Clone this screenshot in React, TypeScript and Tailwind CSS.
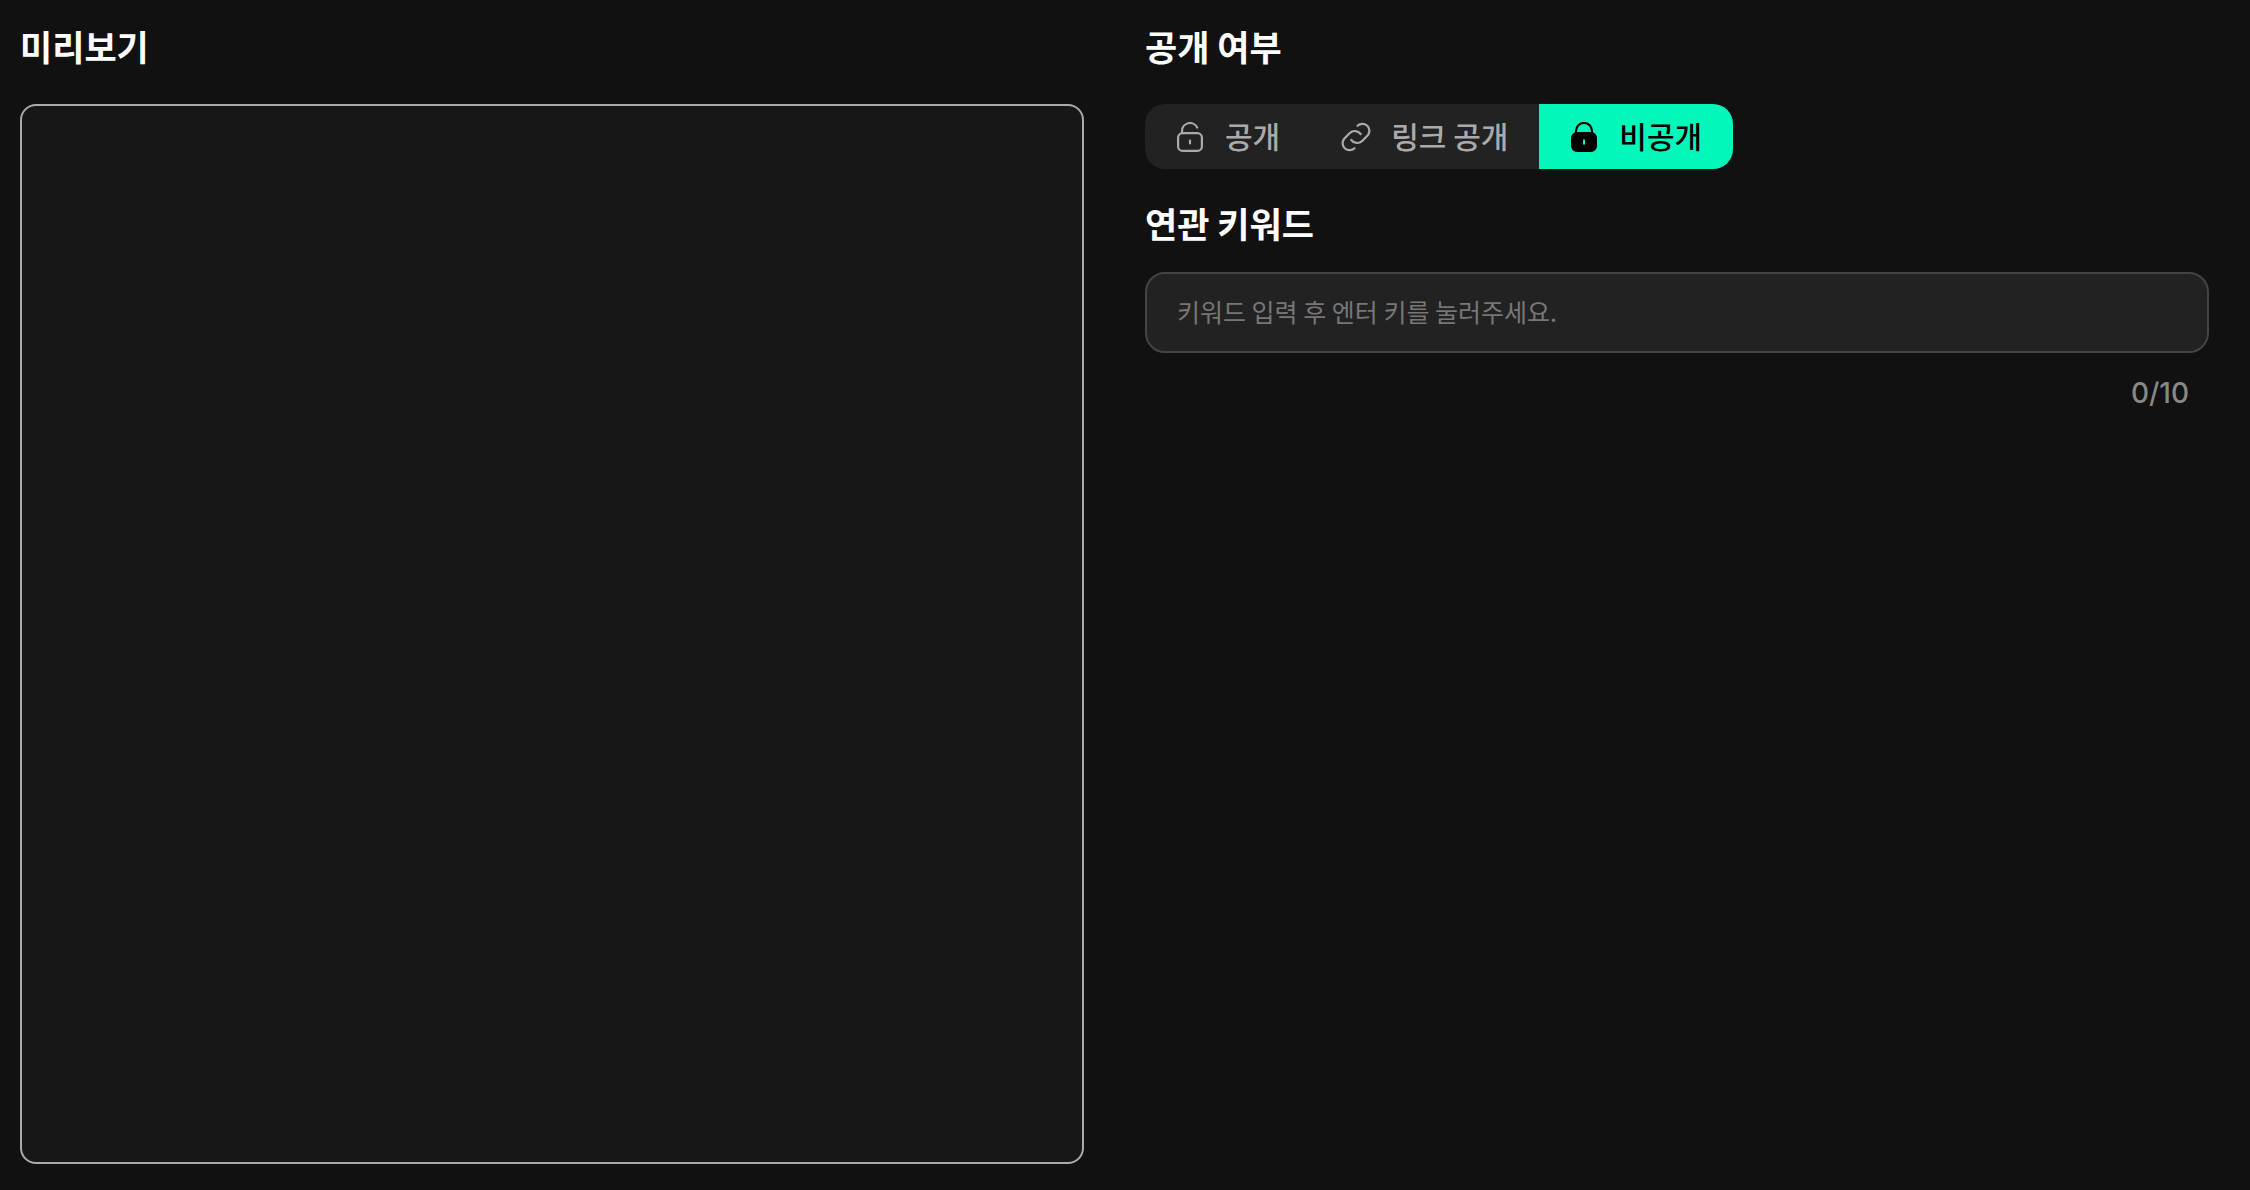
import { useState } from "react";

function UnlockIcon() {
  return (
    <svg className="size-[30px]" viewBox="0 0 30 30" fill="none" stroke="currentColor" strokeWidth="2.2" strokeLinecap="round" aria-hidden="true">
      <rect x="3.1" y="11.1" width="23.8" height="17.8" rx="4.5" />
      <path d="M7 11V9a8 8 0 0 1 15.2-3.4" />
      <path d="M15 18.500v3" />
    </svg>
  );
}

function LinkIcon() {
  return (
    <svg className="size-[30px]" viewBox="0 0 30 30" fill="none" stroke="currentColor" strokeWidth="2.2" strokeLinecap="round" aria-hidden="true">
      <path d="M16.500 3.800A7 7 0 0 1 27 13L21.200 18.900A7.200 7.200 0 0 1 10.300 18" />
      <path d="M13.500 26.200A7 7 0 0 1 3 17L8.800 11.100A7.200 7.200 0 0 1 19.700 12" />
    </svg>
  );
}

function LockIcon() {
  return (
    <svg className="size-[30px]" viewBox="0 0 30 30" aria-hidden="true">
      <path d="M7 12V9a8 8 0 0 1 16 0v3" fill="none" stroke="currentColor" strokeWidth="2.2" />
      <path fillRule="evenodd" fill="currentColor" d="M8 10h14a6 6 0 0 1 6 6v8a6 6 0 0 1-6 6H8a6 6 0 0 1-6-6v-8a6 6 0 0 1 6-6Zm6 7.500v5h2v-5Z" />
    </svg>
  );
}

const options = [
  { id: "public", label: "공개", Icon: UnlockIcon },
  { id: "link", label: "링크 공개", Icon: LinkIcon },
  { id: "private", label: "비공개", Icon: LockIcon },
];

export default function App() {
  const [visibility, setVisibility] = useState("private");

  return (
    <main className="grid min-h-screen grid-cols-2 items-start gap-[61px] bg-[#111111] pr-[41px] pb-[26px] pl-5 font-['Noto_Sans_CJK_KR',sans-serif] text-white">
      <section className="flex flex-col self-stretch">
        <h2 className="mt-[22px] text-[35px] leading-12 font-bold">미리보기</h2>
        <div className="mt-[34px] flex-1 rounded-2xl border-2 border-[#aaaaaa] bg-[#171717]" />
      </section>

      <section className="flex flex-col">
        <h2 className="mt-[22px] text-[35px] leading-12 font-bold">공개 여부</h2>
        <div className="mt-[34px] flex self-start overflow-hidden rounded-[20px] bg-[#222222]" role="group" aria-label="공개 여부">
          {options.map(({ id, label, Icon }) => (
            <button
              key={id}
              type="button"
              aria-pressed={visibility === id}
              onClick={() => setVisibility(id)}
              className={`flex h-[65px] items-center gap-5 pr-[31px] pl-[30px] text-[30px] leading-10 font-medium ${
                visibility === id ? "bg-[#00f8bb] text-black" : "text-[#aaaaaa]"
              }`}
            >
              <Icon />
              <span className="pb-1">{label}</span>
            </button>
          ))}
        </div>

        <label htmlFor="keyword" className="mt-[30px] text-[35px] leading-12 font-bold">
          연관 키워드
        </label>
        <input
          id="keyword"
          type="text"
          placeholder="키워드 입력 후 엔터 키를 눌러주세요."
          className="mt-[25px] h-[81px] w-full rounded-[20px] border-2 border-[#444444] bg-[#222222] px-[30px] pb-1 text-[25px] outline-none placeholder:text-[#777777]"
        />
        <p className="mt-5 pr-5 text-right font-[Inter,sans-serif] text-[28px] leading-10 font-medium text-[#888888]">0/10</p>
      </section>
    </main>
  );
}
